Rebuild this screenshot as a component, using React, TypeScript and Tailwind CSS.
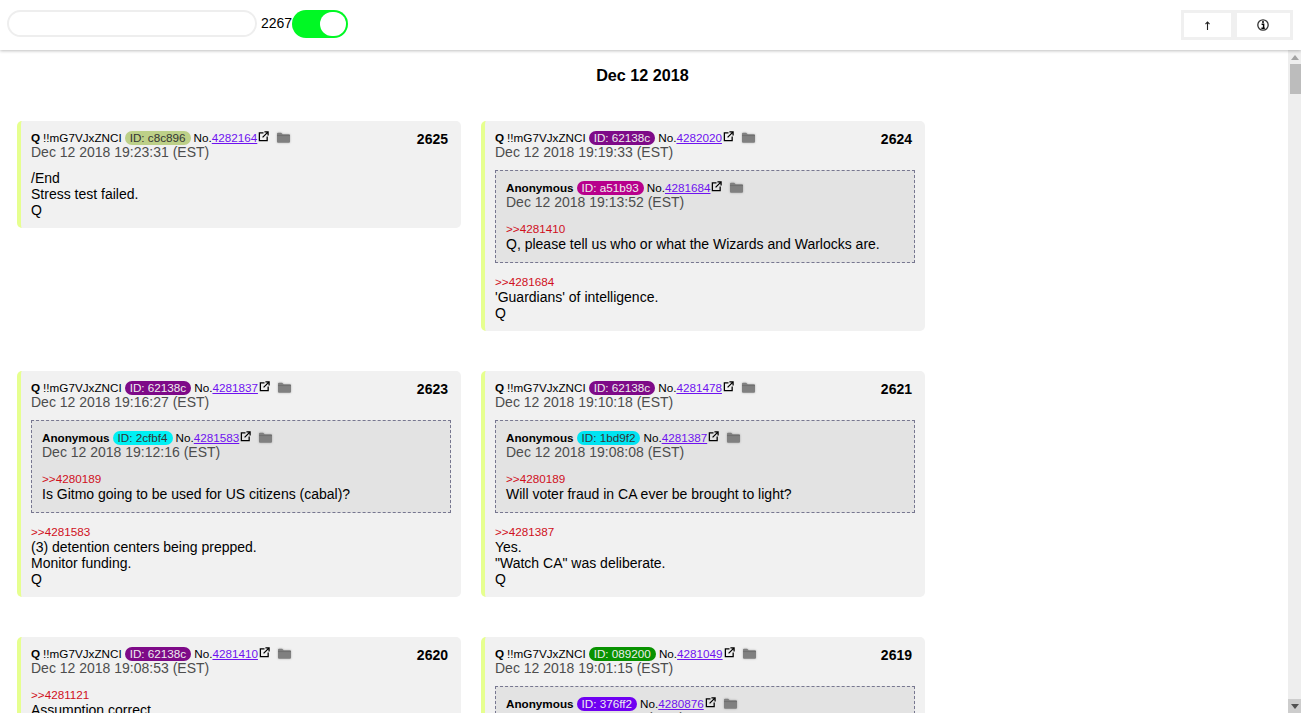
import React from "react";

interface Quote {
  name: string;
  idText: string;
  idClass: string;
  no: string;
  date: string;
  ref: string;
  lines: string[];
}

interface Post {
  num: number;
  idText: string;
  idClass: string;
  no: string;
  date: string;
  quote?: Quote;
  ref?: string;
  lines: string[];
}

const PURPLE = "bg-[#7e0a88] text-[#eeeeee]";

const posts: Post[] = [
  {
    num: 2625,
    idText: "c8c896",
    idClass: "bg-[#bdd088] text-[#333333]",
    no: "4282164",
    date: "Dec 12 2018 19:23:31 (EST)",
    lines: ["/End", "Stress test failed.", "Q"],
  },
  {
    num: 2624,
    idText: "62138c",
    idClass: PURPLE,
    no: "4282020",
    date: "Dec 12 2018 19:19:33 (EST)",
    quote: {
      name: "Anonymous",
      idText: "a51b93",
      idClass: "bg-[#b8008c] text-[#eeeeee]",
      no: "4281684",
      date: "Dec 12 2018 19:13:52 (EST)",
      ref: "4281410",
      lines: ["Q, please tell us who or what the Wizards and Warlocks are."],
    },
    ref: "4281684",
    lines: ["'Guardians' of intelligence.", "Q"],
  },
  {
    num: 2623,
    idText: "62138c",
    idClass: PURPLE,
    no: "4281837",
    date: "Dec 12 2018 19:16:27 (EST)",
    quote: {
      name: "Anonymous",
      idText: "2cfbf4",
      idClass: "bg-[#00f0f4] text-[#333333]",
      no: "4281583",
      date: "Dec 12 2018 19:12:16 (EST)",
      ref: "4280189",
      lines: ["Is Gitmo going to be used for US citizens (cabal)?"],
    },
    ref: "4281583",
    lines: ["(3) detention centers being prepped.", "Monitor funding.", "Q"],
  },
  {
    num: 2621,
    idText: "62138c",
    idClass: PURPLE,
    no: "4281478",
    date: "Dec 12 2018 19:10:18 (EST)",
    quote: {
      name: "Anonymous",
      idText: "1bd9f2",
      idClass: "bg-[#00e4f2] text-[#333333]",
      no: "4281387",
      date: "Dec 12 2018 19:08:08 (EST)",
      ref: "4280189",
      lines: ["Will voter fraud in CA ever be brought to light?"],
    },
    ref: "4281387",
    lines: ["Yes.", '"Watch CA" was deliberate.', "Q"],
  },
  {
    num: 2620,
    idText: "62138c",
    idClass: PURPLE,
    no: "4281410",
    date: "Dec 12 2018 19:08:53 (EST)",
    ref: "4281121",
    lines: ["Assumption correct.", "Q"],
  },
  {
    num: 2619,
    idText: "089200",
    idClass: "bg-[#089200] text-[#eeeeee]",
    no: "4281049",
    date: "Dec 12 2018 19:01:15 (EST)",
    quote: {
      name: "Anonymous",
      idText: "376ff2",
      idClass: "bg-[#6f00f2] text-[#eeeeee]",
      no: "4280876",
      date: "Dec 12 2018 18:58:02 (EST)",
      ref: "4280189",
      lines: ["Is there a plan?"],
    },
    ref: "4280876",
    lines: ["Yes.", "Q"],
  },
];

function MetaLine({ name, tripcode, idText, idClass, no }: { name: string; tripcode?: string; idText: string; idClass: string; no: string }) {
  return (
    <div className="flex items-center h-[14px] text-[11.7px] leading-[14px] text-black whitespace-nowrap">
      <span className="font-bold">{name}</span>
      {tripcode && <span className="ml-[3px]">{tripcode}</span>}
      <span className={`ml-[3px] px-[5px] rounded-full ${idClass}`}>ID: {idText}</span>
      <span className="ml-[3px]">No.</span>
      <a className="text-[#6f12f0] underline">{no}</a>
      <svg className="ml-[1px] mb-[3px]" width="11" height="11" viewBox="0 0 12 12" fill="none" stroke="#000000" strokeWidth="1.4">
        <path d="M6 2H1.5v8.5H10V6" />
        <path d="M5 7L10.5 1.5M7 1h4v4" />
      </svg>
      <svg className="ml-[7px] drop-shadow-[0_0_1px_rgba(0,0,0,0.25)]" width="15" height="12" viewBox="0 0 15 12">
        <path d="M1 1.8a1 1 0 0 1 1-1h3.2l1.5 1.5h6.3a1 1 0 0 1 1 1v6.4a1 1 0 0 1-1 1h-11a1 1 0 0 1-1-1z" fill="#808080" />
        <path d="M1 3.6h13" stroke="#6a6a6a" strokeWidth="0.8" />
      </svg>
    </div>
  );
}

function QuoteBox({ q }: { q: Quote }) {
  return (
    <div className="mt-[11px] border border-dashed border-[#777790] bg-[#e3e3e3] pt-[10px] pb-[10px] px-[10px]">
      <MetaLine name={q.name} idText={q.idText} idClass={q.idClass} no={q.no} />
      <div className="text-[14px] leading-[14px] text-[#4d4d4d]">{q.date}</div>
      <div className="mt-[13px] text-[11.7px] leading-[14px] text-[#d0101c]">&gt;&gt;{q.ref}</div>
      {q.lines.map((l) => (
        <div key={l} className="text-[14px] leading-[16px] text-black">{l}</div>
      ))}
    </div>
  );
}

function PostCard({ post }: { post: Post }) {
  const bodyGap = post.quote ? "mt-[12px]" : post.ref ? "mt-[13px]" : "mt-[11px]";
  return (
    <article className="relative self-start w-[444px] border-l-4 border-[#e6ff8f] rounded-[5px] bg-[#f1f1f1] p-[10px]">
      <span className="absolute right-[13px] top-[10px] text-[14px] leading-[16px] font-bold text-black">{post.num}</span>
      <MetaLine name="Q" tripcode="!!mG7VJxZNCI" idText={post.idText} idClass={post.idClass} no={post.no} />
      <div className="text-[14px] leading-[14px] text-[#4d4d4d]">{post.date}</div>
      {post.quote && <QuoteBox q={post.quote} />}
      <div className={bodyGap}>
        {post.ref && <div className="text-[11.7px] leading-[14px] text-[#d0101c]">&gt;&gt;{post.ref}</div>}
        {post.lines.map((l) => (
          <div key={l} className="text-[14px] leading-[16px] text-black">{l}</div>
        ))}
      </div>
    </article>
  );
}

function ScrollRail() {
  return (
    <div className="w-[13px] shrink-0 flex flex-col bg-[#eeeeee]">
      <div className="h-[14px] flex items-center justify-center">
        <div className="w-0 h-0 border-x-[4px] border-x-transparent border-b-[5px] border-b-[#a3a3a3]" />
      </div>
      <div className="ml-[2px] h-[30px] bg-[#bcbcbc]" />
      <div className="flex-1" />
      <div className="h-[14px] flex items-center justify-center bg-[#cdcdcd]">
        <div className="w-0 h-0 border-x-[4px] border-x-transparent border-t-[5px] border-t-[#505050]" />
      </div>
    </div>
  );
}

export default function App() {
  return (
    <div className="h-screen flex flex-col overflow-hidden bg-white font-['Liberation_Sans',Arial,sans-serif]">
      <header className="z-10 h-[50px] shrink-0 flex items-start justify-between pt-[10px] pl-[7px] pr-[8px] bg-white shadow-[0_1px_3px_rgba(0,0,0,0.25)]">
        <div className="flex items-start">
          <input className="w-[250px] h-[27px] rounded-full border-2 border-[#eeeeee] bg-white outline-none" />
          <span className="ml-[4px] text-[14px] leading-[26px] text-black">2267</span>
          <div className="w-[56px] h-[28px] rounded-full bg-[#00f824] flex items-center justify-end pr-[2px]">
            <div className="w-[26px] h-[24px] rounded-full bg-white" />
          </div>
        </div>
        <div className="flex gap-[6px] p-[3px] bg-[#f0f0f0]">
          <button className="w-[47px] h-[24px] bg-white flex items-center justify-center">
            <svg width="7" height="9" viewBox="0 0 7 9" fill="none" stroke="#222222" strokeWidth="1.1">
              <path d="M3.5 9V1" />
              <path d="M1.5 3.2L3.5 1l2 2.2" />
            </svg>
          </button>
          <button className="w-[53px] h-[24px] bg-white flex items-center justify-center pr-[1px]">
            <svg width="12" height="12" viewBox="0 0 12 12" fill="none">
              <circle cx="6" cy="6" r="5.2" stroke="#333333" strokeWidth="1.3" />
              <path d="M4.6 5.2H6.6V9.2M4.4 9.3H7.8" stroke="#000000" strokeWidth="1.5" />
              <circle cx="6" cy="3.1" r="1" fill="#000000" />
            </svg>
          </button>
        </div>
      </header>
      <div className="flex-1 min-h-0 flex">
        <main className="flex-1 min-w-0 overflow-hidden">
          <h2 className="mt-[16px] pr-[3px] text-center text-[16.2px] leading-[18px] font-bold text-black">Dec 12 2018</h2>
          <div className="mt-[37px] pl-[17px] grid grid-cols-[444px_444px] gap-x-[20px] gap-y-[40px]">
            {posts.map((p) => (
              <PostCard key={p.num} post={p} />
            ))}
          </div>
        </main>
        <ScrollRail />
      </div>
    </div>
  );
}
